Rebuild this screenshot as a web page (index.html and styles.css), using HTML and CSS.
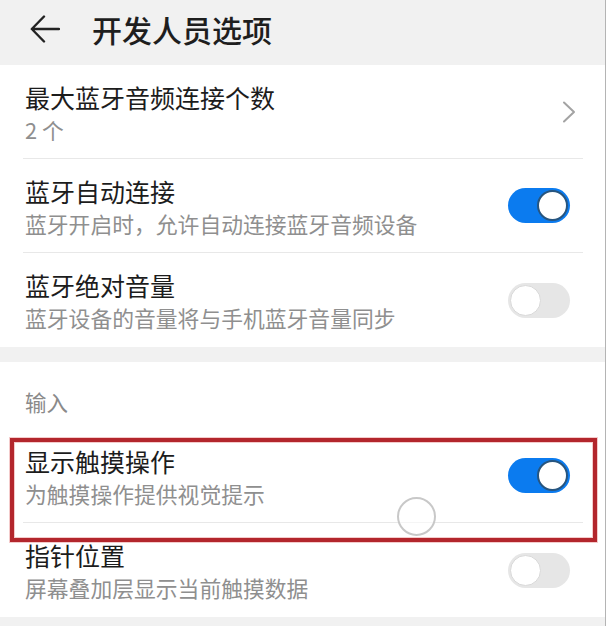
FILE: index.html
```html
<!DOCTYPE html>
<html lang="zh-CN">
<head>
<meta charset="utf-8">
<title>开发人员选项</title>
<link rel="stylesheet" href="styles.css">
</head>
<body>
<div class="screen">
  <header class="appbar">
    <svg class="back" width="30" height="28" viewBox="0 0 30 28" aria-hidden="true">
      <path d="M29 14 H2 M14 1.5 L1.8 14 L14 26.5" fill="none" stroke="#222" stroke-width="2.4" stroke-linecap="round" stroke-linejoin="round"/>
    </svg>
    <h1 class="title">开发人员选项</h1>
  </header>

  <section class="group">
    <div class="row">
      <div class="row-text">
        <div class="row-title">最大蓝牙音频连接个数</div>
        <div class="row-sub">2 个</div>
      </div>
      <svg class="chevron" width="14" height="22" viewBox="0 0 14 22" aria-hidden="true">
        <path d="M2 1.5 L12 11 L2 20.5" fill="none" stroke="#a3a3a3" stroke-width="2" stroke-linecap="round" stroke-linejoin="round"/>
      </svg>
    </div>
    <div class="row">
      <div class="row-text">
        <div class="row-title">蓝牙自动连接</div>
        <div class="row-sub">蓝牙开启时，允许自动连接蓝牙音频设备</div>
      </div>
      <div class="switch on"><span class="knob"></span></div>
    </div>
    <div class="row last">
      <div class="row-text">
        <div class="row-title">蓝牙绝对音量</div>
        <div class="row-sub">蓝牙设备的音量将与手机蓝牙音量同步</div>
      </div>
      <div class="switch"><span class="knob"></span></div>
    </div>
  </section>

  <div class="gap"></div>

  <section class="group">
    <div class="label">输入</div>
    <div class="row">
      <div class="row-text">
        <div class="row-title">显示触摸操作</div>
        <div class="row-sub">为触摸操作提供视觉提示</div>
      </div>
      <div class="switch on"><span class="knob"></span></div>
    </div>
    <div class="row last">
      <div class="row-text">
        <div class="row-title">指针位置</div>
        <div class="row-sub">屏幕叠加层显示当前触摸数据</div>
      </div>
      <div class="switch"><span class="knob"></span></div>
    </div>
  </section>

  <div class="bottom"></div>

  <div class="highlight"></div>
  <div class="touch"></div>
</div>
</body>
</html>
```

FILE: styles.css
```css
html, body {
  margin: 0;
  padding: 0;
  background: #ffffff;
}

body {
  width: 607px;
  height: 626px;
  overflow: hidden;
  font-family: "Noto Sans CJK SC", "Noto Sans", sans-serif;
}

.screen {
  position: relative;
  width: 605px;
  height: 626px;
  border-right: 1px solid #b4b4b4;
  background: #ffffff;
  overflow: hidden;
}

.appbar {
  height: 65px;
  box-sizing: border-box;
  background: #f1f1f1;
  display: flex;
  align-items: center;
  padding: 0 0 8px 30px;
}

.back {
  display: block;
  flex: none;
}

.title {
  margin: 0 0 0 32px;
  font-size: 30px;
  font-weight: 500;
  line-height: 40px;
  color: #1e1e1e;
}

.group {
  background: #ffffff;
}

.row {
  height: 94px;
  box-sizing: border-box;
  margin: 0 22px 0 23px;
  display: flex;
  align-items: center;
  border-bottom: 1px solid #e8e8e8;
}

.row.last {
  border-bottom: none;
}

.row-text {
  flex: 1;
  align-self: flex-start;
  padding-top: 17px;
  padding-left: 2px;
}

.row-title {
  font-size: 25px;
  line-height: 31px;
  color: #1c1c1c;
}

.row-sub {
  font-size: 21.8px;
  line-height: 33px;
  color: #8f8f8f;
}

.chevron {
  display: block;
  flex: none;
  margin-right: 7px;
}

.switch {
  flex: none;
  width: 62px;
  height: 35px;
  box-sizing: border-box;
  border-radius: 18px;
  background: #e6e6e6;
  display: flex;
  align-items: center;
  justify-content: flex-start;
  padding: 0 2px;
  margin-right: 13px;
}

.switch.on {
  background: #0b7bef;
  justify-content: flex-end;
}

.knob {
  width: 31px;
  height: 31px;
  box-sizing: border-box;
  border-radius: 50%;
  background: #ffffff;
  border: 1.5px solid #d9d9d9;
}

.switch.on .knob {
  border: 2px solid #27557f;
}

.gap {
  height: 15px;
  background: #f1f1f1;
}

.label {
  height: 67px;
  box-sizing: border-box;
  padding: 28px 0 0 25px;
  font-size: 21.5px;
  line-height: 24px;
  color: #8a8a8a;
}

.bottom {
  height: 12px;
  background: #f1f1f1;
}

.highlight {
  position: absolute;
  left: 10px;
  top: 438px;
  width: 587px;
  height: 104px;
  box-sizing: border-box;
  border: 4px solid #b3262c;
  box-shadow: 0 0 0 1px rgba(230, 140, 140, 0.45), inset 0 0 0 1px rgba(230, 140, 140, 0.45);
}

.touch {
  position: absolute;
  left: 397px;
  top: 497px;
  width: 39px;
  height: 39px;
  box-sizing: border-box;
  border-radius: 50%;
  border: 2px solid #c8c8c8;
  background: rgba(255, 255, 255, 0.55);
}
```
